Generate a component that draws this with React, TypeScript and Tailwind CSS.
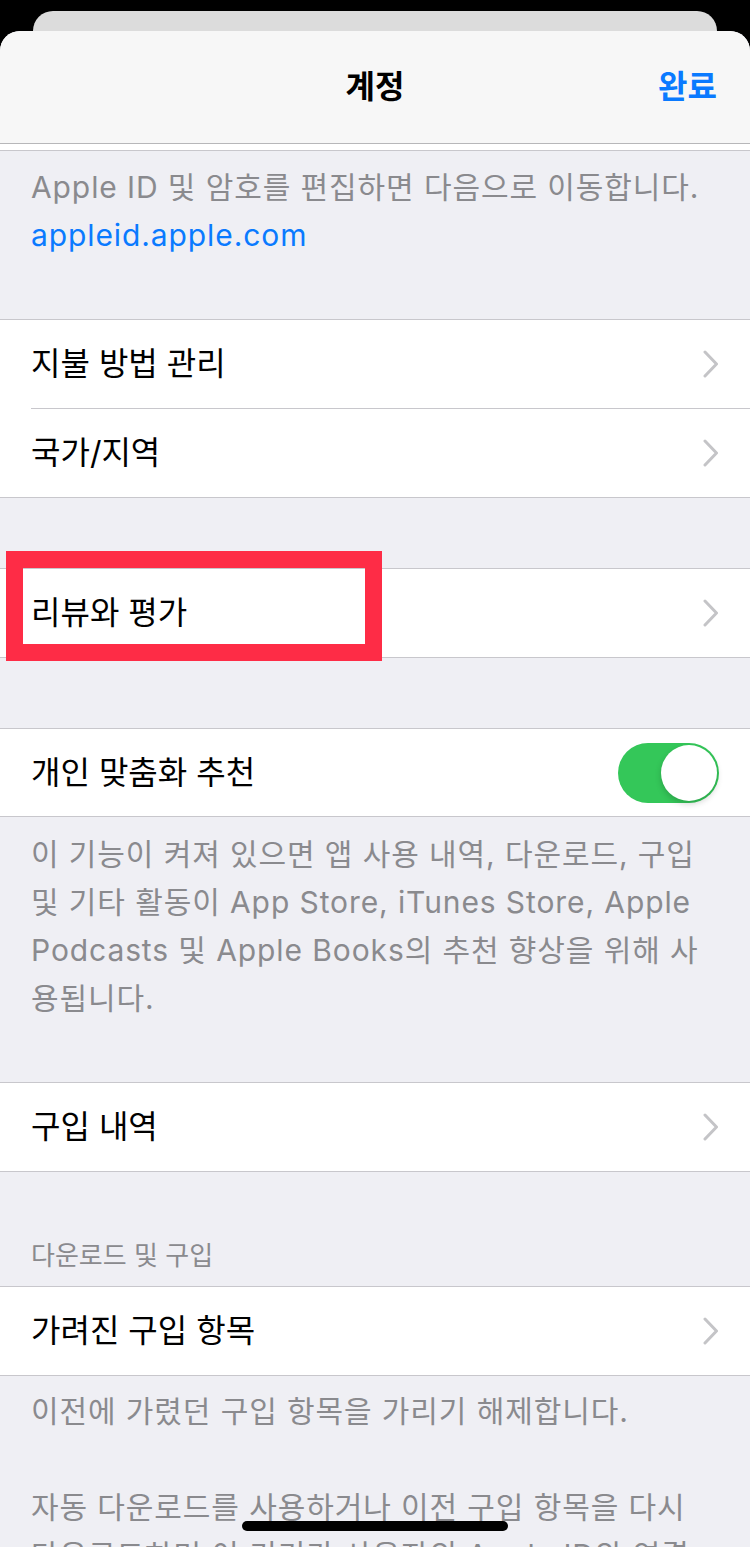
import type { ReactNode } from "react"

const Chevron = () => (
  <svg width="16" height="28" viewBox="0 0 16 28" className="shrink-0">
    <polyline
      points="2,2 13.5,14 2,26"
      fill="none"
      stroke="#c4c4c7"
      strokeWidth="3"
      strokeLinecap="round"
      strokeLinejoin="round"
    />
  </svg>
)

const Toggle = () => (
  <div className="flex h-[60px] w-[101px] items-center justify-end rounded-full bg-[#34c759] p-[2px]">
    <div className="h-[56px] w-[56px] rounded-full bg-white shadow-[0_3px_6px_rgba(0,0,0,0.18)]" />
  </div>
)

type RowProps = {
  label: string
  last?: boolean
  height?: string
  trailing?: ReactNode
}

const Row = ({ label, last, height = "h-[88px]", trailing }: RowProps) => (
  <div className="pl-[31px]">
    <div
      className={`flex ${height} items-center justify-between pr-[31px] ${
        last ? "" : "border-b border-[#c8c7cc]"
      }`}
    >
      <span className="text-[32px] leading-none text-black">{label}</span>
      {trailing ?? <Chevron />}
    </div>
  </div>
)

const Group = ({ children }: { children: ReactNode }) => (
  <div className="border-y border-[#c8c7cc] bg-white">{children}</div>
)

const Footer = ({ lines, className }: { lines: string[]; className: string }) => (
  <div
    className={`px-[31px] text-[30px] leading-[48px] tracking-[0.9px] text-[#8a8a8e] ${className}`}
  >
    {lines.map((line, i) => (
      <p key={i} className="h-[48px] whitespace-nowrap">
        {line}
      </p>
    ))}
  </div>
)

export default function App() {
  return (
    <div className="relative h-[1547px] overflow-hidden bg-black font-[family-name:Inter,'Noto_Sans_CJK_KR',sans-serif]">
      <div className="px-[33px] pt-[11px]">
        <div className="h-[20px] rounded-t-[22px] bg-[#dcdcdc]" />
      </div>

      <div className="overflow-hidden rounded-t-[20px] bg-[#efeff4]">
        <header className="grid h-[113px] grid-cols-3 items-center border-b border-[#b7b7b9] bg-[#f7f7f7] px-[33px]">
          <span />
          <h1 className="text-center text-[32px] font-semibold text-black">계정</h1>
          <button className="justify-self-end text-[32px] font-semibold text-[#0a7aff]">
            완료
          </button>
        </header>
        <div className="h-[7px] border-b border-[#c8c7cc] bg-white" />

        <div className="h-[168px] px-[31px] pt-[12px] text-[30px] leading-[48px] tracking-[0.9px]">
          <p className="whitespace-nowrap text-[#8a8a8e]">
            Apple ID 및 암호를 편집하면 다음으로 이동합니다.
          </p>
          <p className="text-[#0a7aff]">appleid.apple.com</p>
        </div>

        <Group>
          <Row label="지불 방법 관리" height="h-[89px]" />
          <Row label="국가/지역" last />
        </Group>

        <div className="h-[70px]" />

        <div className="relative">
          <Group>
            <Row label="리뷰와 평가" last />
          </Group>
          <div className="absolute left-[6px] top-[-17px] h-[110px] w-[376px] border-[17px] border-[#fe2c46]" />
        </div>

        <div className="h-[70px]" />

        <Group>
          <Row label="개인 맞춤화 추천" height="h-[87px]" last trailing={<Toggle />} />
        </Group>

        <Footer
          className="h-[265px] pt-[13px]"
          lines={[
            "이 기능이 켜져 있으면 앱 사용 내역, 다운로드, 구입",
            "및 기타 활동이 App Store, iTunes Store, Apple",
            "Podcasts 및 Apple Books의 추천 향상을 위해 사",
            "용됩니다.",
          ]}
        />

        <Group>
          <Row label="구입 내역" last />
        </Group>

        <div className="flex h-[114px] items-end px-[31px] pb-[14px]">
          <span className="text-[26px] leading-[32px] text-[#8a8a8e]">다운로드 및 구입</span>
        </div>

        <Group>
          <Row label="가려진 구입 항목" last />
        </Group>

        <Footer
          className="pt-[11px]"
          lines={[
            "이전에 가렸던 구입 항목을 가리기 해제합니다.",
            "",
            "자동 다운로드를 사용하거나 이전 구입 항목을 다시",
            "다운로드하면 이 기기가 사용자의 Apple ID와 연결",
          ]}
        />
      </div>

      <div className="absolute bottom-[16px] left-[242px] h-[10px] w-[266px] rounded-full bg-black" />
    </div>
  )
}
